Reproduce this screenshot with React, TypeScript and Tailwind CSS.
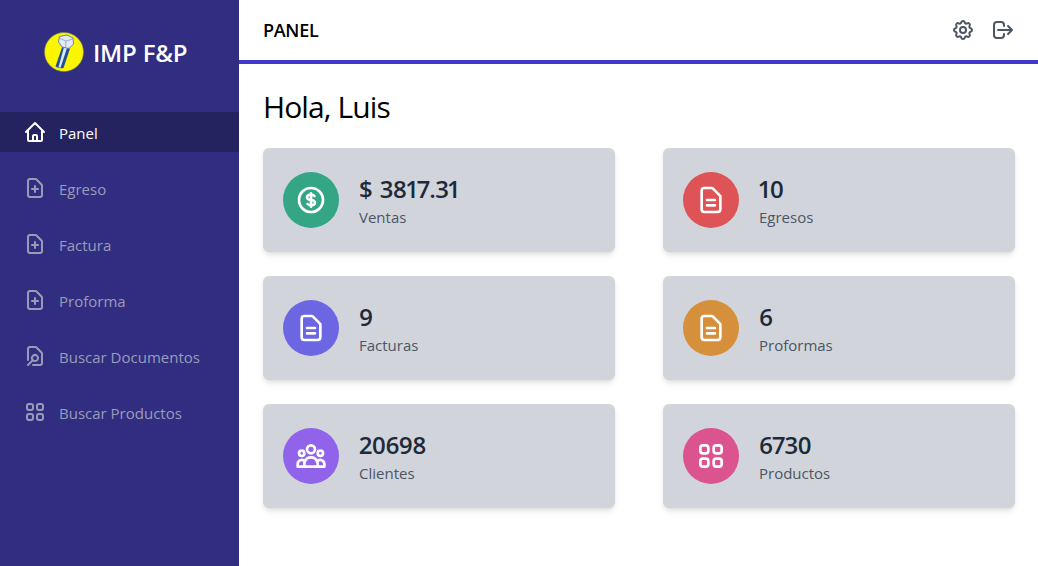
const HOME = 'M3 12l2-2m0 0l7-7 7 7M5 10v10a1 1 0 001 1h3m10-11l2 2m-2-2v10a1 1 0 01-1 1h-3m-6 0a1 1 0 001-1v-4a1 1 0 011-1h2a1 1 0 011 1v4a1 1 0 001 1m-6 0h6';
const DOC_ADD = 'M9 13h6m-3-3v6m5 5H7a2 2 0 01-2-2V5a2 2 0 012-2h5.586a1 1 0 01.707.293l5.414 5.414a1 1 0 01.293.707V19a2 2 0 01-2 2z';
const DOC_SEARCH = 'M10 21h7a2 2 0 002-2V9.414a1 1 0 00-.293-.707l-5.414-5.414A1 1 0 0012.586 3H7a2 2 0 00-2 2v11m0 5l4.879-4.879m0 0a3 3 0 104.243-4.242 3 3 0 00-4.243 4.242z';
const GRID = 'M4 6a2 2 0 012-2h2a2 2 0 012 2v2a2 2 0 01-2 2H6a2 2 0 01-2-2V6zM14 6a2 2 0 012-2h2a2 2 0 012 2v2a2 2 0 01-2 2h-2a2 2 0 01-2-2V6zM4 16a2 2 0 012-2h2a2 2 0 012 2v2a2 2 0 01-2 2H6a2 2 0 01-2-2v-2zM14 16a2 2 0 012-2h2a2 2 0 012 2v2a2 2 0 01-2 2h-2a2 2 0 01-2-2v-2z';
const USERS = 'M17 20h5v-2a3 3 0 00-5.356-1.857M17 20H7m10 0v-2c0-.656-.126-1.283-.356-1.857M7 20H2v-2a3 3 0 015.356-1.857M7 20v-2c0-.656.126-1.283.356-1.857m0 0a5.002 5.002 0 019.288 0M15 7a3 3 0 11-6 0 3 3 0 016 0zm6 3a2 2 0 11-4 0 2 2 0 014 0zM7 10a2 2 0 11-4 0 2 2 0 014 0z';
const DOLLAR = 'M12 8c-1.657 0-3 .895-3 2s1.343 2 3 2 3 .895 3 2-1.343 2-3 2m0-8c1.11 0 2.08.402 2.599 1M12 8V7m0 1v8m0 0v1m0-1c-1.11 0-2.08-.402-2.599-1M21 12a9 9 0 11-18 0 9 9 0 0118 0z';
const DOC_TEXT = 'M9 12h6m-6 4h6m2 5H7a2 2 0 01-2-2V5a2 2 0 012-2h5.586a1 1 0 01.707.293l5.414 5.414a1 1 0 01.293.707V19a2 2 0 01-2 2z';
const COG = 'M10.325 4.317c.426-1.756 2.924-1.756 3.35 0a1.724 1.724 0 002.573 1.066c1.543-.94 3.31.826 2.37 2.37a1.724 1.724 0 001.065 2.572c1.756.426 1.756 2.924 0 3.35a1.724 1.724 0 00-1.066 2.573c.94 1.543-.826 3.31-2.37 2.37a1.724 1.724 0 00-2.572 1.065c-.426 1.756-2.924 1.756-3.35 0a1.724 1.724 0 00-2.573-1.066c-1.543.94-3.31-.826-2.37-2.37a1.724 1.724 0 00-1.065-2.572c-1.756-.426-1.756-2.924 0-3.35a1.724 1.724 0 001.066-2.573c-.94-1.543.826-3.31 2.37-2.37.996.608 2.296.07 2.572-1.065zM15 12a3 3 0 11-6 0 3 3 0 016 0z';
const LOGOUT = 'M17 16l4-4m0 0l-4-4m4 4H7m6 4v1a3 3 0 01-3 3H6a3 3 0 01-3-3V7a3 3 0 013-3h4a3 3 0 013 3v1';

function Icon({ d, className }: { d: string; className?: string }) {
  return (
    <svg className={className} fill="none" viewBox="0 0 24 24" stroke="currentColor" strokeWidth={2} strokeLinecap="round" strokeLinejoin="round">
      <path d={d} />
    </svg>
  );
}

function BoltLogo() {
  return (
    <svg className="w-10 h-10 shrink-0" viewBox="0 0 40 40">
      <circle cx="20" cy="20" r="19.5" fill="#fbf500" stroke="#6f8a5a" strokeWidth="0.6" />
      {/* shank */}
      <path d="M18.5 14 L26 16.5 L19.5 36 Q15 37 11.5 34.5 Z" fill="#1d4f9c" />
      <path d="M20 15 L23 16 L16.5 35.8 L14.5 35.2 Z" fill="#dfe6f2" />
      {/* head */}
      <path d="M15.5 4.5 L23 3 L29 6 L29.5 12 L25 16.5 L18 15 L14.5 10 Z" fill="#e4e9f4" stroke="#5b78ad" strokeWidth="0.9" strokeLinejoin="round" />
      <path d="M16 6.5 L22 9 L29 7 M22 9 L21.5 15.5" fill="none" stroke="#7f97c4" strokeWidth="0.7" />
    </svg>
  );
}

const navItems = [
  { label: 'Egreso', d: DOC_ADD },
  { label: 'Factura', d: DOC_ADD },
  { label: 'Proforma', d: DOC_ADD },
  { label: 'Buscar Documentos', d: DOC_SEARCH },
  { label: 'Buscar Productos', d: GRID },
];

const cards = [
  { value: '$ 3817.31', label: 'Ventas', d: DOLLAR, color: 'bg-[#34a585]' },
  { value: '10', label: 'Egresos', d: DOC_TEXT, color: 'bg-[#dd5356]' },
  { value: '9', label: 'Facturas', d: DOC_TEXT, color: 'bg-[#6c66e2]' },
  { value: '6', label: 'Proformas', d: DOC_TEXT, color: 'bg-[#d68f3a]' },
  { value: '20698', label: 'Clientes', d: USERS, color: 'bg-[#9163ea]' },
  { value: '6730', label: 'Productos', d: GRID, color: 'bg-[#db5490]' },
];

export default function App() {
  return (
    <div className="flex h-[566px] overflow-hidden bg-white font-['Open_Sans','Noto_Sans',sans-serif]">
      <aside className="w-[239px] shrink-0 bg-[#312e81]">
        <div className="flex items-center gap-[9px] pt-8 pl-11">
          <BoltLogo />
          <span className="h-10 text-2xl leading-[41px] font-semibold text-white tracking-[-0.2px]">IMP F&amp;P</span>
        </div>
        <nav className="mt-10">
          <a className="flex items-center gap-3 h-10 pl-6 bg-[#25235f] text-white text-[15px]">
            <Icon d={HOME} className="w-6 h-6 -ml-[1px]" />
            <span className="pt-0.5">Panel</span>
          </a>
          {navItems.map((item) => (
            <a key={item.label} className="flex items-center gap-3 h-10 pl-6 mt-4 text-[#9a9bb9] text-[15px]">
              <Icon d={item.d} className="w-6 h-6 -ml-[1px]" />
              <span className="pt-0.5">{item.label}</span>
            </a>
          ))}
        </nav>
      </aside>
      <div className="flex-1 min-w-0">
        <header className="flex items-center justify-between h-16 pl-6 pr-[23px] border-b-4 border-[#4338ca]">
          <h1 className="text-lg font-semibold text-black tracking-[-0.3px]">PANEL</h1>
          <div className="flex items-center gap-4 text-[#4b5563]">
            <Icon d={COG} className="w-6 h-6" />
            <Icon d={LOGOUT} className="w-6 h-6" />
          </div>
        </header>
        <main className="pl-6 pr-[23px] pt-6">
          <h2 className="pt-px h-9 text-3xl leading-9 text-black tracking-[-0.9px]">Hola, Luis</h2>
          <div className="grid grid-cols-2 gap-x-12 gap-y-6 mt-6">
            {cards.map((card) => (
              <div key={card.label} className="flex items-center gap-5 h-[104px] px-5 rounded-md bg-[#d1d5db] shadow-md">
                <div className={`flex items-center justify-center w-14 h-14 rounded-full text-white ${card.color}`}>
                  <Icon d={card.d} className="w-8 h-8" />
                </div>
                <div className="pt-0.5">
                  <div className="text-2xl leading-8 font-semibold proportional-nums text-[#1f2937] tracking-[-0.6px] [word-spacing:2px]">{card.value}</div>
                  <div className="text-[15px] leading-6 text-[#4b5563]">{card.label}</div>
                </div>
              </div>
            ))}
          </div>
        </main>
      </div>
    </div>
  );
}
